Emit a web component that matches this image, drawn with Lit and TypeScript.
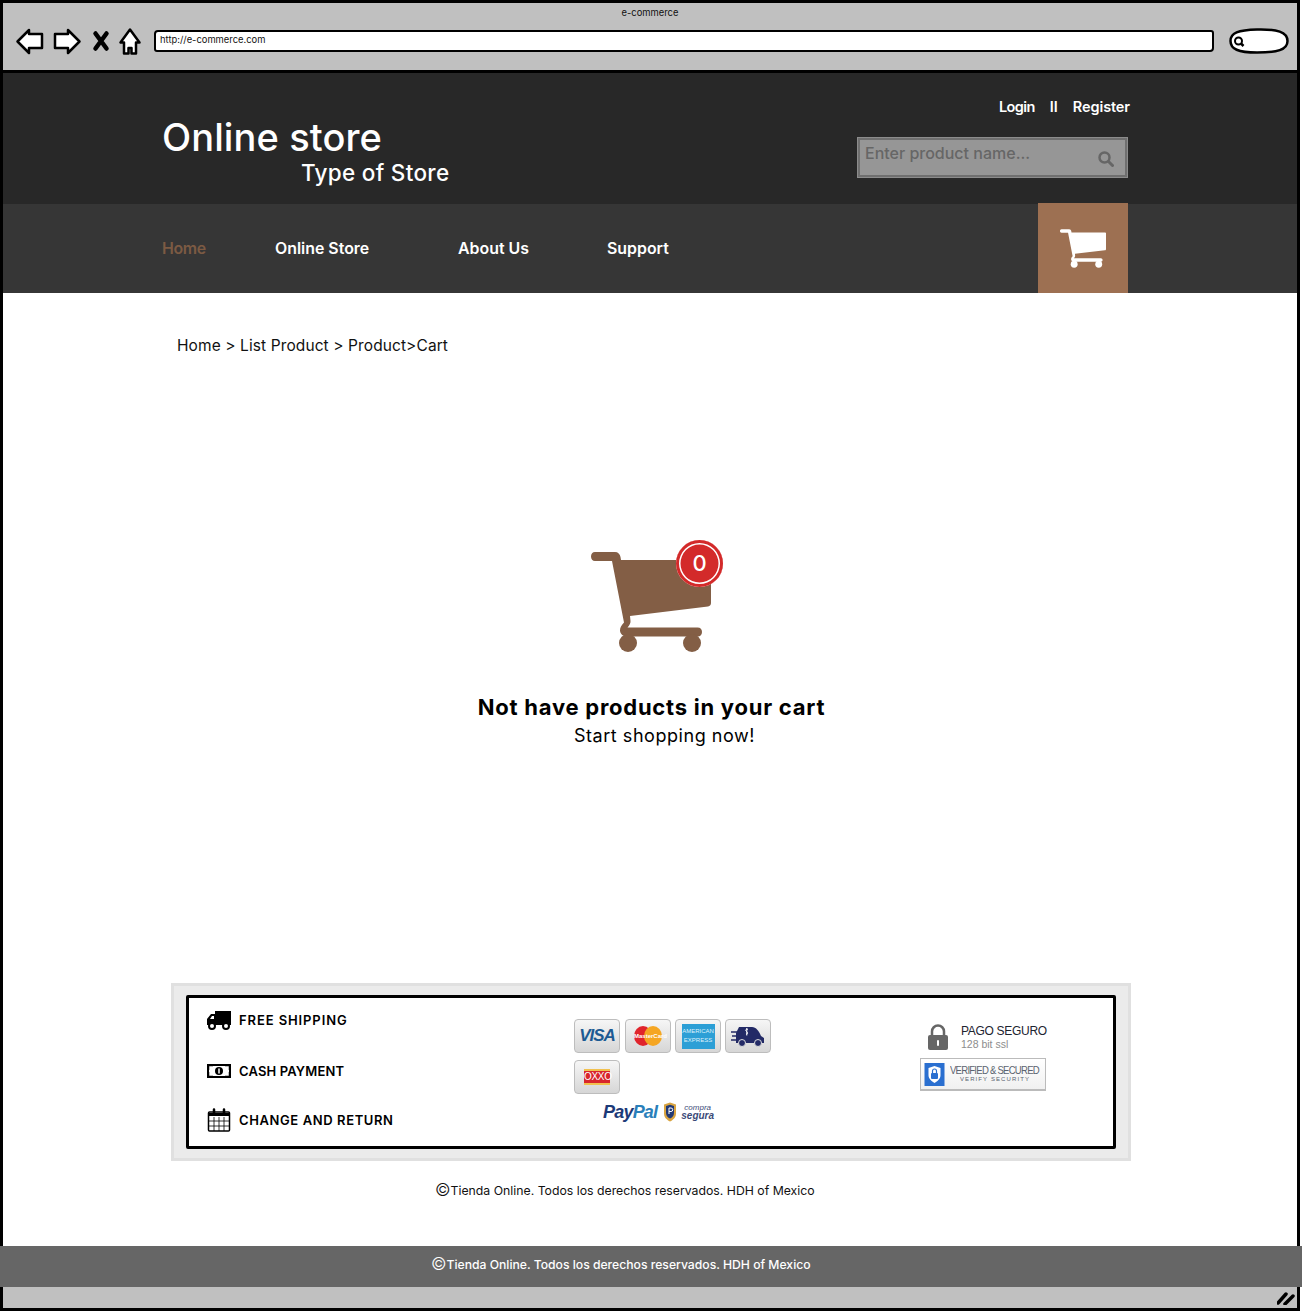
import { LitElement, html, css } from 'lit';
import { customElement } from 'lit/decorators.js';

const cartPath = 'M4 0h20c3 0 5 2 5.500 5l.5 3h88c1 0 2 1 2 2v41c0 2-1 3-3 3.500l-78 9.500.5 5c.2 2-.8 4-3 6.500h70c3 0 4.500 2 4.500 4.500s-1.500 4.500-4.500 4.500H36c-4 0-7-3-7-6 0-2.500 1-5 4-8L21 9H4C1.500 9 0 7 0 4.500S1.500 0 4 0z';

@customElement('browser-chrome')
class BrowserChrome extends LitElement {
    static styles = css`
        :host {
            display: block;
            height: 70px;
            background: #c0c0c0;
            border-bottom: 3px solid #000;
            box-sizing: border-box;
            font-family: Inter, sans-serif;
        }

        .title {
            height: 21px;
            padding-top: 4px;
            box-sizing: border-box;
            text-align: center;
            font-size: 9.400px;
            line-height: 12px;
            color: #111;
        }

        .toolbar {
            display: flex;
            align-items: center;
            padding: 0 10px 0 13px;
            height: 34px;
        }

        svg {
            display: block;
            flex: none;
            overflow: visible;
        }

        .nav-icon {
            fill: #fff;
            stroke: #000;
            stroke-width: 2.500;
            stroke-linejoin: round;
        }

        .back { margin-right: 9px; }
        .forward { margin-right: 12px; }
        .stop { margin-right: 10px; }
        .home { margin-right: 13px; }

        .address {
            flex: none;
            width: 1060px;
            height: 22px;
            box-sizing: border-box;
            background: #fff;
            border: 2.500px solid #000;
            border-radius: 4px 3px 4px 3px;
            padding-left: 4px;
            font-size: 9.400px;
            line-height: 15px;
            color: #111;
            margin-right: 15px;
        }
    `;

    render() {
        return html`
            <div class="title">e-commerce</div>
            <div class="toolbar">
                <svg class="nav-icon back" width="28" height="25" viewBox="0 0 28 25">
                    <path d="M13 1L1.500 12.500 13 24v-5h13V5H13z"/>
                </svg>
                <svg class="nav-icon forward" width="28" height="25" viewBox="0 0 28 25">
                    <path d="M15 1l11.500 11.500L15 24v-5H2V5h13z"/>
                </svg>
                <svg class="stop" width="16" height="20" viewBox="0 0 16 20">
                    <path d="M2.500 2.500l11 15M13.500 2.500l-11 15" stroke="#000" stroke-width="4.500" stroke-linecap="round" fill="none"/>
                </svg>
                <svg class="nav-icon home" width="22" height="27" viewBox="0 0 22 27">
                    <path d="M11 1.500L1.500 14.500H5V25.500H9.500V20H12.500V25.500H17V14.500H20.500z"/>
                </svg>
                <div class="address">http://e-commerce.com</div>
                <svg width="60" height="26" viewBox="0 0 60 26">
                    <path d="M1.500 13C1.500 5 9 2 28 1.500 48 1 58.500 4 58.500 13 58.500 22 48 24.500 28 24.500 9 24.500 1.500 21 1.500 13z" fill="#fff" stroke="#000" stroke-width="2.500"/>
                    <circle cx="9.500" cy="13" r="3.500" fill="none" stroke="#000" stroke-width="2"/>
                    <path d="M12 15.500l2.500 2.500" stroke="#000" stroke-width="2.500"/>
                </svg>
            </div>
        `;
    }
}

@customElement('site-header')
class SiteHeader extends LitElement {
    static styles = css`
        :host {
            display: block;
            font-family: Inter, sans-serif;
            color: #fff;
        }

        .top {
            height: 131px;
            background: #282828;
            box-sizing: border-box;
            padding: 0 169px 0 159px;
            display: flex;
            justify-content: space-between;
        }

        .brand {
            padding-top: 41px;
        }

        .brand-name {
            font-size: 38px;
            line-height: 46px;
            font-weight: 500;
            letter-spacing: 0.1px;
        }

        .brand-type {
            font-size: 22.500px;
            line-height: 26px;
            font-weight: 500;
            margin-left: 139px;
            letter-spacing: 0.3px;
        }

        .account {
            display: flex;
            flex-direction: column;
            align-items: flex-end;
            padding-top: 23px;
        }

        .links {
            display: flex;
            gap: 15px;
            font-size: 14.500px;
            line-height: 22px;
            font-weight: 600;
            margin-right: -2px;
        }

        .login {
            letter-spacing: -0.6px;
        }

        .register {
            letter-spacing: -0.1px;
        }

        .search {
            margin-top: 19px;
            width: 271px;
            height: 41px;
            box-sizing: border-box;
            background: #969696;
            border: 3px solid #6f6f6f;
            outline: 1px solid #8c8c8c;
            outline-offset: -1px;
            display: flex;
            justify-content: space-between;
            padding: 2px 11px 0 5px;
            font-size: 16px;
            font-weight: 500;
            line-height: 22px;
            color: #666;
        }

        .search svg {
            margin-top: 9px;
        }

        .bar {
            height: 89px;
            background: #363636;
            box-sizing: border-box;
            padding: 0 169px 0 159px;
            display: flex;
            align-items: center;
            font-size: 15.900px;
            font-weight: 600;
        }

        .bar a {
            display: block;
        }

        .bar .active {
            color: #7c5a43;
            width: 113px;
            letter-spacing: -0.4px;
        }

        .store { width: 183px; }
        .about { width: 149px; }
        .support { flex: 1; }

        .cart {
            width: 90px;
            height: 90px;
            margin-top: -1px;
            background: #9d7052;
            display: flex;
            align-items: center;
            justify-content: center;
        }
    `;

    render() {
        return html`
            <div class="top">
                <div class="brand">
                    <div class="brand-name">Online store</div>
                    <div class="brand-type">Type of Store</div>
                </div>
                <div class="account">
                    <div class="links"><span class="login">Login</span><span>II</span><span class="register">Register</span></div>
                    <div class="search">
                        <span>Enter product name...</span>
                        <svg width="16" height="16" viewBox="0 0 16 16">
                            <circle cx="6.500" cy="6.500" r="5" fill="none" stroke="#666" stroke-width="2.500"/>
                            <path d="M10.500 10.500l4 4" stroke="#666" stroke-width="3" stroke-linecap="round"/>
                        </svg>
                    </div>
                </div>
            </div>
            <div class="bar">
                <a class="active">Home</a>
                <a class="store">Online Store</a>
                <a class="about">About Us</a>
                <a class="support">Support</a>
                <div class="cart">
                    <svg width="46" height="39" viewBox="0 0 120 100">
                        <path d=${cartPath} fill="#fff"/>
                        <circle cx="37" cy="91" r="9" fill="#fff"/>
                        <circle cx="101" cy="91" r="9" fill="#fff"/>
                    </svg>
                </div>
            </div>
        `;
    }
}

@customElement('pay-methods')
class PayMethods extends LitElement {
    static styles = css`
        :host {
            display: block;
            font-family: "Liberation Sans", sans-serif;
        }

        .cards {
            display: flex;
            flex-wrap: wrap;
            gap: 7px 4px;
            width: 200px;
        }

        .card {
            width: 46px;
            height: 34px;
            box-sizing: border-box;
            border: 1px solid #bdbdbd;
            border-radius: 4px;
            background: linear-gradient(#f6f6f6, #d6d6d6);
            display: flex;
            align-items: center;
            justify-content: center;
            overflow: hidden;
        }

        .second {
            margin-left: 1px;
        }

        .visa {
            font-size: 17px;
            font-weight: 700;
            font-style: italic;
            letter-spacing: -1px;
            color: #1c5a93;
        }

        .amex {
            width: 33px;
            height: 25px;
            background: #2c9fd6;
            color: #dff2fb;
            font-size: 6px;
            line-height: 9px;
            padding-top: 3px;
            box-sizing: border-box;
            text-align: center;
            white-space: nowrap;
        }

        .master {
            position: relative;
            width: 28px;
            height: 20px;
        }

        .master i {
            position: absolute;
            top: 0;
            width: 18px;
            height: 20px;
            border-radius: 50%;
        }

        .master i:first-child { left: 0; background: #e0242c; }
        .master i:nth-child(2) { right: 0; background: #f5a623; }

        .master span {
            position: absolute;
            inset: 6px 0 0;
            font-size: 6px;
            line-height: 8px;
            font-weight: 700;
            text-align: center;
            color: #fff;
            white-space: nowrap;
        }

        .oxxo {
            width: 26px;
            height: 16px;
            background: linear-gradient(#f2c14e 0 12%, #d8262c 12% 88%, #f2c14e 88%);
            color: #fff;
            font-size: 10px;
            line-height: 16px;
            text-align: center;
            letter-spacing: -0.3px;
        }

        .trust {
            display: flex;
            align-items: center;
            gap: 6px;
            margin: 7px 0 0 29px;
        }

        .paypal {
            font-size: 18px;
            line-height: 22px;
            font-weight: 700;
            font-style: italic;
            letter-spacing: -0.8px;
            color: #1c3a78;
        }

        .paypal span { color: #2a7fba; }

        .segura {
            font-size: 10px;
            line-height: 8px;
            font-weight: 700;
            font-style: italic;
            color: #3b4a78;
            text-align: center;
            margin-left: -2px;
        }

        .segura small {
            display: block;
            font-size: 8px;
            font-weight: 400;
        }
    `;

    render() {
        return html`
            <div class="cards">
                <div class="card"><span class="visa">VISA</span></div>
                <div class="card second">
                    <div class="master"><i></i><i></i><span>MasterCard</span></div>
                </div>
                <div class="card"><div class="amex">AMERICAN<br>EXPRESS</div></div>
                <div class="card">
                    <svg width="34" height="22" viewBox="0 0 34 22">
                        <path d="M8 2h13c4 0 7 4 9 9l3 2v5H5V8z" fill="#232a66"/>
                        <path d="M0 7h6M1 11h5M0 15h6" stroke="#232a66" stroke-width="1.500"/>
                        <circle cx="11" cy="18" r="3.500" fill="#232a66" stroke="#ddd"/>
                        <circle cx="27" cy="18" r="3.500" fill="#232a66" stroke="#ddd"/>
                        <path d="M17 4.500c-2-1-3 1-1.500 2s1.500 3-.5 2.500M15.800 3v7.500" stroke="#fff" fill="none"/>
                    </svg>
                </div>
                <div class="card"><div class="oxxo">OXXO</div></div>
            </div>
            <div class="trust">
                <span class="paypal">Pay<span>Pal</span></span>
                <svg width="14" height="20" viewBox="0 0 14 20">
                    <path d="M1 2.500L7 .5l6 2v9c0 4-3 6.500-6 8-3-1.500-6-4-6-8z" fill="#d9a441"/>
                    <path d="M3 4l4-1.300L11 4v7c0 3-2 4.500-4 5.500-2-1-4-2.500-4-5.500z" fill="#233a75"/>
                    <path d="M6 12V6h2a1.500 1.500 0 010 3.500H6" stroke="#fff" fill="none"/>
                </svg>
                <div class="segura"><small>compra</small>segura</div>
            </div>
        `;
    }
}

@customElement('secure-badges')
class SecureBadges extends LitElement {
    static styles = css`
        :host {
            display: block;
            font-family: "Liberation Sans", sans-serif;
        }

        .pago {
            display: flex;
            align-items: center;
            gap: 13px;
            padding-left: 8px;
        }

        .pago-title {
            font-size: 12px;
            line-height: 13px;
            letter-spacing: -0.3px;
            color: #1d2430;
        }

        .pago-sub {
            font-size: 10.500px;
            line-height: 12px;
            color: #8d8d8d;
        }

        .verified {
            width: 126px;
            height: 33px;
            box-sizing: border-box;
            margin-top: 8px;
            border: 1px solid #bbb;
            border-bottom-width: 2px;
            background: linear-gradient(#fff, #f0f0f0);
            display: flex;
            align-items: center;
            gap: 5px;
            padding-left: 3px;
        }

        .verified svg {
            flex: none;
        }

        .verified-title {
            font-size: 11.500px;
            line-height: 11px;
            letter-spacing: -0.9px;
            width: 90px;
            font-stretch: condensed;
            color: #5b6470;
            white-space: nowrap;
            transform-origin: left;
            transform: scaleX(0.83);
        }

        .verified-sub {
            font-size: 6px;
            line-height: 7px;
            letter-spacing: 1.100px;
            width: 90px;
            color: #5b6470;
            text-align: center;
            white-space: nowrap;
        }
    `;

    render() {
        return html`
            <div class="pago">
                <svg width="20" height="26" viewBox="0 0 20 26">
                    <path d="M4 12V7.500a6 6 0 0112 0V12" fill="none" stroke="#666" stroke-width="2.500"/>
                    <rect y="11" width="20" height="15" rx="2" fill="#666"/>
                    <path d="M10 17v4" stroke="#fff" stroke-width="2" stroke-linecap="round"/>
                </svg>
                <div>
                    <div class="pago-title">PAGO SEGURO</div>
                    <div class="pago-sub">128 bit ssl</div>
                </div>
            </div>
            <div class="verified">
                <svg width="21" height="23" viewBox="0 0 20 23">
                    <rect width="20" height="23" fill="#2a6fd0"/>
                    <path d="M10 3l6 2v7c0 4-3 6-6 8-3-2-6-4-6-8V5z" fill="#fff"/>
                    <rect x="6.500" y="10" width="7" height="6" rx="1" fill="#2a6fd0"/>
                    <path d="M8 10V8a2 2 0 014 0v2" fill="none" stroke="#2a6fd0" stroke-width="1.200"/>
                </svg>
                <div>
                    <div class="verified-title">VERIFIED &amp; SECURED</div>
                    <div class="verified-sub">VERIFY SECURITY</div>
                </div>
            </div>
        `;
    }
}

@customElement('service-box')
class ServiceBox extends LitElement {
    static styles = css`
        :host {
            display: block;
            width: 960px;
            height: 178px;
            box-sizing: border-box;
            background: #ebebeb;
            border: 3px solid #e0e0e0;
            padding: 9px 12px 9px;
            font-family: Inter, sans-serif;
        }

        .inner {
            height: 100%;
            box-sizing: border-box;
            background: #fff;
            border: 3px solid #000;
            border-radius: 2px;
            display: grid;
            grid-template-columns: 385px 346px 1fr;
        }

        .features {
            padding: 10px 0 0 18px;
            display: flex;
            flex-direction: column;
        }

        .feature {
            display: flex;
            align-items: center;
            gap: 8px;
            height: 24px;
            margin-bottom: 25px;
            font-size: 13px;
            font-weight: 600;
            letter-spacing: 0.6px;
            color: #000;
        }

        .feature:first-child {
            margin-bottom: 27px;
            letter-spacing: 0.9px;
        }

        .feature.cash {
            letter-spacing: 0.15px;
        }

        .feature svg {
            flex: none;
            display: block;
        }

        .pay {
            padding-top: 21px;
        }

        .secure {
            padding-top: 26px;
        }
    `;

    render() {
        return html`
            <div class="inner">
                <div class="features">
                    <div class="feature">
                        <svg width="24" height="20" viewBox="0 0 24 20">
                            <path d="M8 1h16v14H0V9l4-5h4z" fill="#000"/>
                            <path d="M3 9l2-3h2v3z" fill="#fff"/>
                            <circle cx="5" cy="16" r="3" fill="#fff" stroke="#000" stroke-width="2"/>
                            <circle cx="19" cy="16" r="3" fill="#fff" stroke="#000" stroke-width="2"/>
                        </svg>
                        FREE SHIPPING
                    </div>
                    <div class="feature cash">
                        <svg width="24" height="14" viewBox="0 0 24 14">
                            <rect x="1" y="1" width="22" height="12" fill="#fff" stroke="#000" stroke-width="2"/>
                            <path d="M1 1h5M1 1v5M23 1h-5M23 1v5M1 13h5M1 13V8M23 13h-5M23 13V8" stroke="#000" stroke-width="2.500"/>
                            <circle cx="12" cy="7" r="4" fill="#000"/>
                            <path d="M12 4.500v5" stroke="#fff" stroke-width="1.500"/>
                        </svg>
                        CASH PAYMENT
                    </div>
                    <div class="feature">
                        <svg width="24" height="24" viewBox="0 0 24 24">
                            <rect x="1.500" y="4" width="21" height="19" rx="1" fill="#fff" stroke="#000" stroke-width="1.500"/>
                            <path d="M1.500 5h21v3h-21z" fill="#000"/>
                            <path d="M7 9v14M12 9v14M17 9v14M2 13h20M2 18h20" stroke="#000" stroke-width=".8"/>
                            <path d="M7 1.500v5M17 1.500v5" stroke="#000" stroke-width="2.500" stroke-linecap="round"/>
                        </svg>
                        CHANGE AND RETURN
                    </div>
                </div>
                <pay-methods class="pay"></pay-methods>
                <secure-badges class="secure"></secure-badges>
            </div>
        `;
    }
}

@customElement('app-root')
class AppRoot extends LitElement {
    static styles = css`
        :host {
            display: block;
            width: 1300px;
            font-family: Inter, sans-serif;
        }

        .frame {
            box-sizing: border-box;
            height: 1311px;
            border: 3px solid #000;
            display: flex;
            flex-direction: column;
            background: #fff;
        }

        main {
            flex: 1;
            display: flex;
            flex-direction: column;
        }

        .crumbs {
            padding: 43px 0 0 174px;
            font-size: 15.500px;
            line-height: 20px;
            letter-spacing: 0.1px;
            color: #111;
        }

        .empty {
            position: relative;
            width: 132px;
            height: 112px;
            margin: 196px 0 0 588px;
        }

        .empty svg {
            display: block;
        }

        .badge {
            position: absolute;
            left: 85px;
            top: -12px;
            width: 47px;
            height: 47px;
            box-sizing: border-box;
            border-radius: 50%;
            background: #d32a2a;
            box-shadow: inset 0 0 0 3px #d32a2a, inset 0 0 0 4.500px #fff;
            color: #fff;
            text-align: center;
            font-size: 22px;
            line-height: 47px;
            font-weight: 500;
        }

        .headline {
            margin-top: 29px;
            padding-left: 3px;
            text-align: center;
            font-size: 22px;
            line-height: 28px;
            font-weight: 700;
            color: #000;
            letter-spacing: 0.75px;
        }

        .sub {
            margin-top: 2px;
            text-align: center;
            padding-left: 29px;
            font-size: 18px;
            line-height: 26px;
            color: #000;
            letter-spacing: 0.55px;
        }

        service-box {
            margin: 234px 0 0 168px;
        }

        .copy {
            padding: 21px 0 0 432px;
            font-size: 12.270px;
            line-height: 18px;
            color: #111;
        }

        .copy span,
        footer span {
            font-size: 17px;
            font-weight: 300;
            line-height: 1;
            vertical-align: -1px;
        }

        footer {
            height: 41px;
            margin: auto -5px 0 -3px;
            background: #666;
            color: #fff;
            padding-left: 431px;
            font-size: 12.200px;
            font-weight: 500;
            letter-spacing: -0.01px;
            line-height: 37px;
        }

        .status {
            height: 21px;
            background: #c0c0c0;
            display: flex;
            justify-content: flex-end;
            align-items: center;
            padding-right: 2px;
        }

        .status svg {
            display: block;
        }
    `;

    render() {
        return html`
            <div class="frame">
                <browser-chrome></browser-chrome>
                <site-header></site-header>
                <main>
                    <div class="crumbs">Home &gt; List Product &gt; Product&gt;Cart</div>
                    <div class="empty">
                        <svg width="120" height="100" viewBox="0 0 120 100">
                            <path d=${cartPath} fill="#835e45"/>
                            <circle cx="37" cy="91" r="9" fill="#835e45"/>
                            <circle cx="101" cy="91" r="9" fill="#835e45"/>
                        </svg>
                        <div class="badge">0</div>
                    </div>
                    <div class="headline">Not have products in your cart</div>
                    <div class="sub">Start shopping now!</div>
                    <service-box></service-box>
                    <div class="copy"><span>©</span>Tienda Online. Todos los derechos reservados. HDH of Mexico</div>
                    <footer><span>©</span>Tienda Online. Todos los derechos reservados. HDH of Mexico</footer>
                </main>
                <div class="status">
                    <svg width="18" height="14" viewBox="0 0 18 14">
                        <path d="M1 12L9 3M8 13l8-8" stroke="#000" stroke-width="3.500" stroke-linecap="round"/>
                    </svg>
                </div>
            </div>
        `;
    }
}
